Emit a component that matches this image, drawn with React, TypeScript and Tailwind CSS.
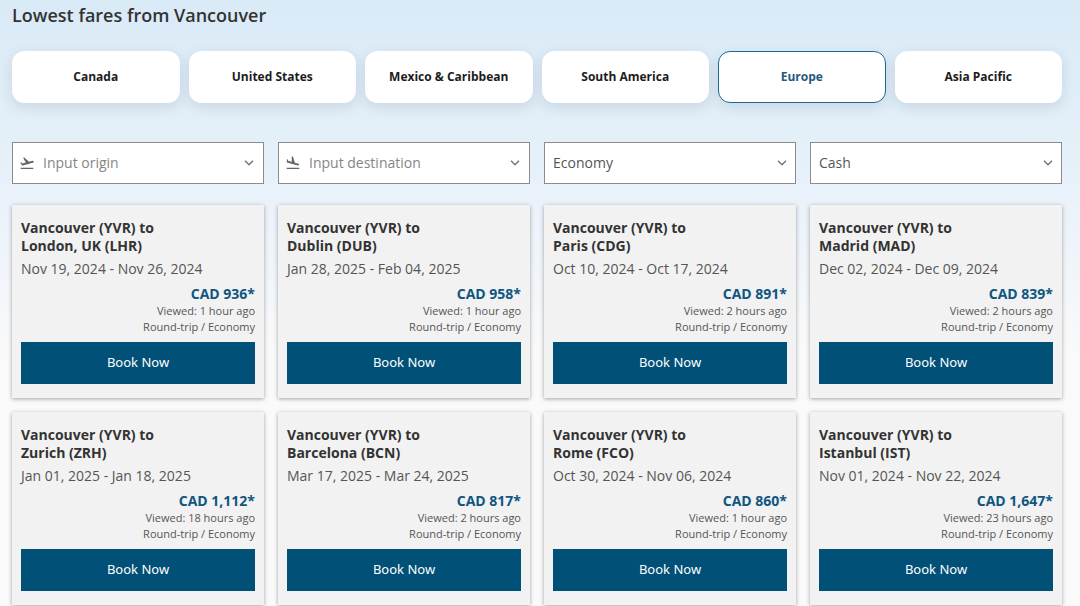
import { useState } from "react";
import type { ReactNode } from "react";
import { MdFlightLand, MdFlightTakeoff } from "react-icons/md";

interface Fare {
  id: number;
  city: string;
  dates: string;
  price: string;
  viewed: string;
}

const regions: string[] = [
  "Canada",
  "United States",
  "Mexico & Caribbean",
  "South America",
  "Europe",
  "Asia Pacific",
];

const fares: Fare[] = [
  {
    id: 1,
    city: "London, UK (LHR)",
    dates: "Nov 19, 2024 - Nov 26, 2024",
    price: "CAD 936*",
    viewed: "1 hour ago",
  },
  {
    id: 2,
    city: "Dublin (DUB)",
    dates: "Jan 28, 2025 - Feb 04, 2025",
    price: "CAD 958*",
    viewed: "1 hour ago",
  },
  {
    id: 3,
    city: "Paris (CDG)",
    dates: "Oct 10, 2024 - Oct 17, 2024",
    price: "CAD 891*",
    viewed: "2 hours ago",
  },
  {
    id: 4,
    city: "Madrid (MAD)",
    dates: "Dec 02, 2024 - Dec 09, 2024",
    price: "CAD 839*",
    viewed: "2 hours ago",
  },
  {
    id: 5,
    city: "Zurich (ZRH)",
    dates: "Jan 01, 2025 - Jan 18, 2025",
    price: "CAD 1,112*",
    viewed: "18 hours ago",
  },
  {
    id: 6,
    city: "Barcelona (BCN)",
    dates: "Mar 17, 2025 - Mar 24, 2025",
    price: "CAD 817*",
    viewed: "2 hours ago",
  },
  {
    id: 7,
    city: "Rome (FCO)",
    dates: "Oct 30, 2024 - Nov 06, 2024",
    price: "CAD 860*",
    viewed: "1 hour ago",
  },
  {
    id: 8,
    city: "Istanbul (IST)",
    dates: "Nov 01, 2024 - Nov 22, 2024",
    price: "CAD 1,647*",
    viewed: "23 hours ago",
  },
];

function Chevron() {
  return (
    <svg
      viewBox="0 0 10 6"
      aria-hidden="true"
      className="pointer-events-none h-1.5 w-2.5 shrink-0 text-[#777]"
    >
      <path d="M1 .8l4 4 4-4" fill="none" stroke="currentColor" strokeWidth="1.5" />
    </svg>
  );
}

function AirportField({ label, icon }: { label: string; icon: ReactNode }) {
  return (
    <label className="flex h-[42px] items-center gap-2 border border-[#8c8c8c] bg-white pr-[9px] pl-1.5 text-[#666]">
      {icon}
      <input
        type="text"
        aria-label={label}
        placeholder={label}
        className="w-full min-w-0 flex-1 bg-transparent text-sm outline-none placeholder:text-[#858585]"
      />
      <Chevron />
    </label>
  );
}

function SelectField({ label, options }: { label: string; options: string[] }) {
  return (
    <div className="relative h-[42px] border border-[#8c8c8c] bg-white">
      <select
        aria-label={label}
        className="h-full w-full appearance-none bg-transparent px-2 text-sm text-[#555] outline-none"
      >
        {options.map((option) => (
          <option key={option}>{option}</option>
        ))}
      </select>
      <span className="pointer-events-none absolute inset-y-0 right-2 flex items-center">
        <Chevron />
      </span>
    </div>
  );
}

function FareCard({ fare }: { fare: Fare }) {
  return (
    <article className="bg-[#f2f2f2] px-[9px] py-3.5 shadow-[0_1px_4px_rgba(0,0,0,0.35)]">
      <h3 className="text-sm leading-[18px] font-bold text-[#333]">
        Vancouver (YVR) to
        <br />
        {fare.city}
      </h3>
      <p className="mt-1 text-sm leading-5 text-[#555]">{fare.dates}</p>
      <div className="mt-1.5 text-right text-[11px] leading-4 text-[#555]">
        <p className="text-sm leading-[18px] font-bold text-[#0f5680]">{fare.price}</p>
        <p>Viewed: {fare.viewed}</p>
        <p>Round-trip / Economy</p>
      </div>
      <button
        type="button"
        className="mt-[7px] h-[42px] w-full bg-[#005078] font-['Noto_Sans',sans-serif] text-[13px] text-white"
      >
        Book Now
      </button>
    </article>
  );
}

export default function App() {
  const [region, setRegion] = useState("Europe");

  return (
    <main className="min-h-screen bg-[#fafafa] bg-[linear-gradient(to_bottom,#d9eaf7_0px,#e4f0f8_140px,#e9f1fa_190px,#fafafa_360px)] pt-[3px] pr-[18px] pb-4 pl-3 font-['Open_Sans',sans-serif]">
      <h2 className="text-lg leading-6 font-semibold text-[#333]">
        Lowest fares from Vancouver
      </h2>

      {/* Regions */}
      <div className="mt-6 grid grid-cols-6 gap-[9px]">
        {regions.map((name) => (
          <button
            key={name}
            type="button"
            aria-pressed={name === region}
            onClick={() => setRegion(name)}
            className={`h-[52px] rounded-xl border bg-white text-xs font-bold shadow-[0_4px_14px_rgba(0,40,70,0.12)] ${
              name === region ? "border-[#1a6a92] text-[#1f5a80]" : "border-white text-[#1c1c1c]"
            }`}
          >
            {name}
          </button>
        ))}
      </div>

      {/* Filters */}
      <div className="mt-[39px] grid grid-cols-4 gap-3.5">
        <AirportField
          label="Input origin"
          icon={<MdFlightTakeoff className="size-4 shrink-0" />}
        />
        <AirportField
          label="Input destination"
          icon={<MdFlightLand className="size-4 shrink-0" />}
        />
        <SelectField label="Cabin" options={["Economy", "Business"]} />
        <SelectField label="Fare type" options={["Cash", "Miles"]} />
      </div>

      {/* Fares */}
      <div className="mt-[21px] grid grid-cols-4 gap-3.5">
        {fares.map((fare) => (
          <FareCard key={fare.id} fare={fare} />
        ))}
      </div>
    </main>
  );
}
